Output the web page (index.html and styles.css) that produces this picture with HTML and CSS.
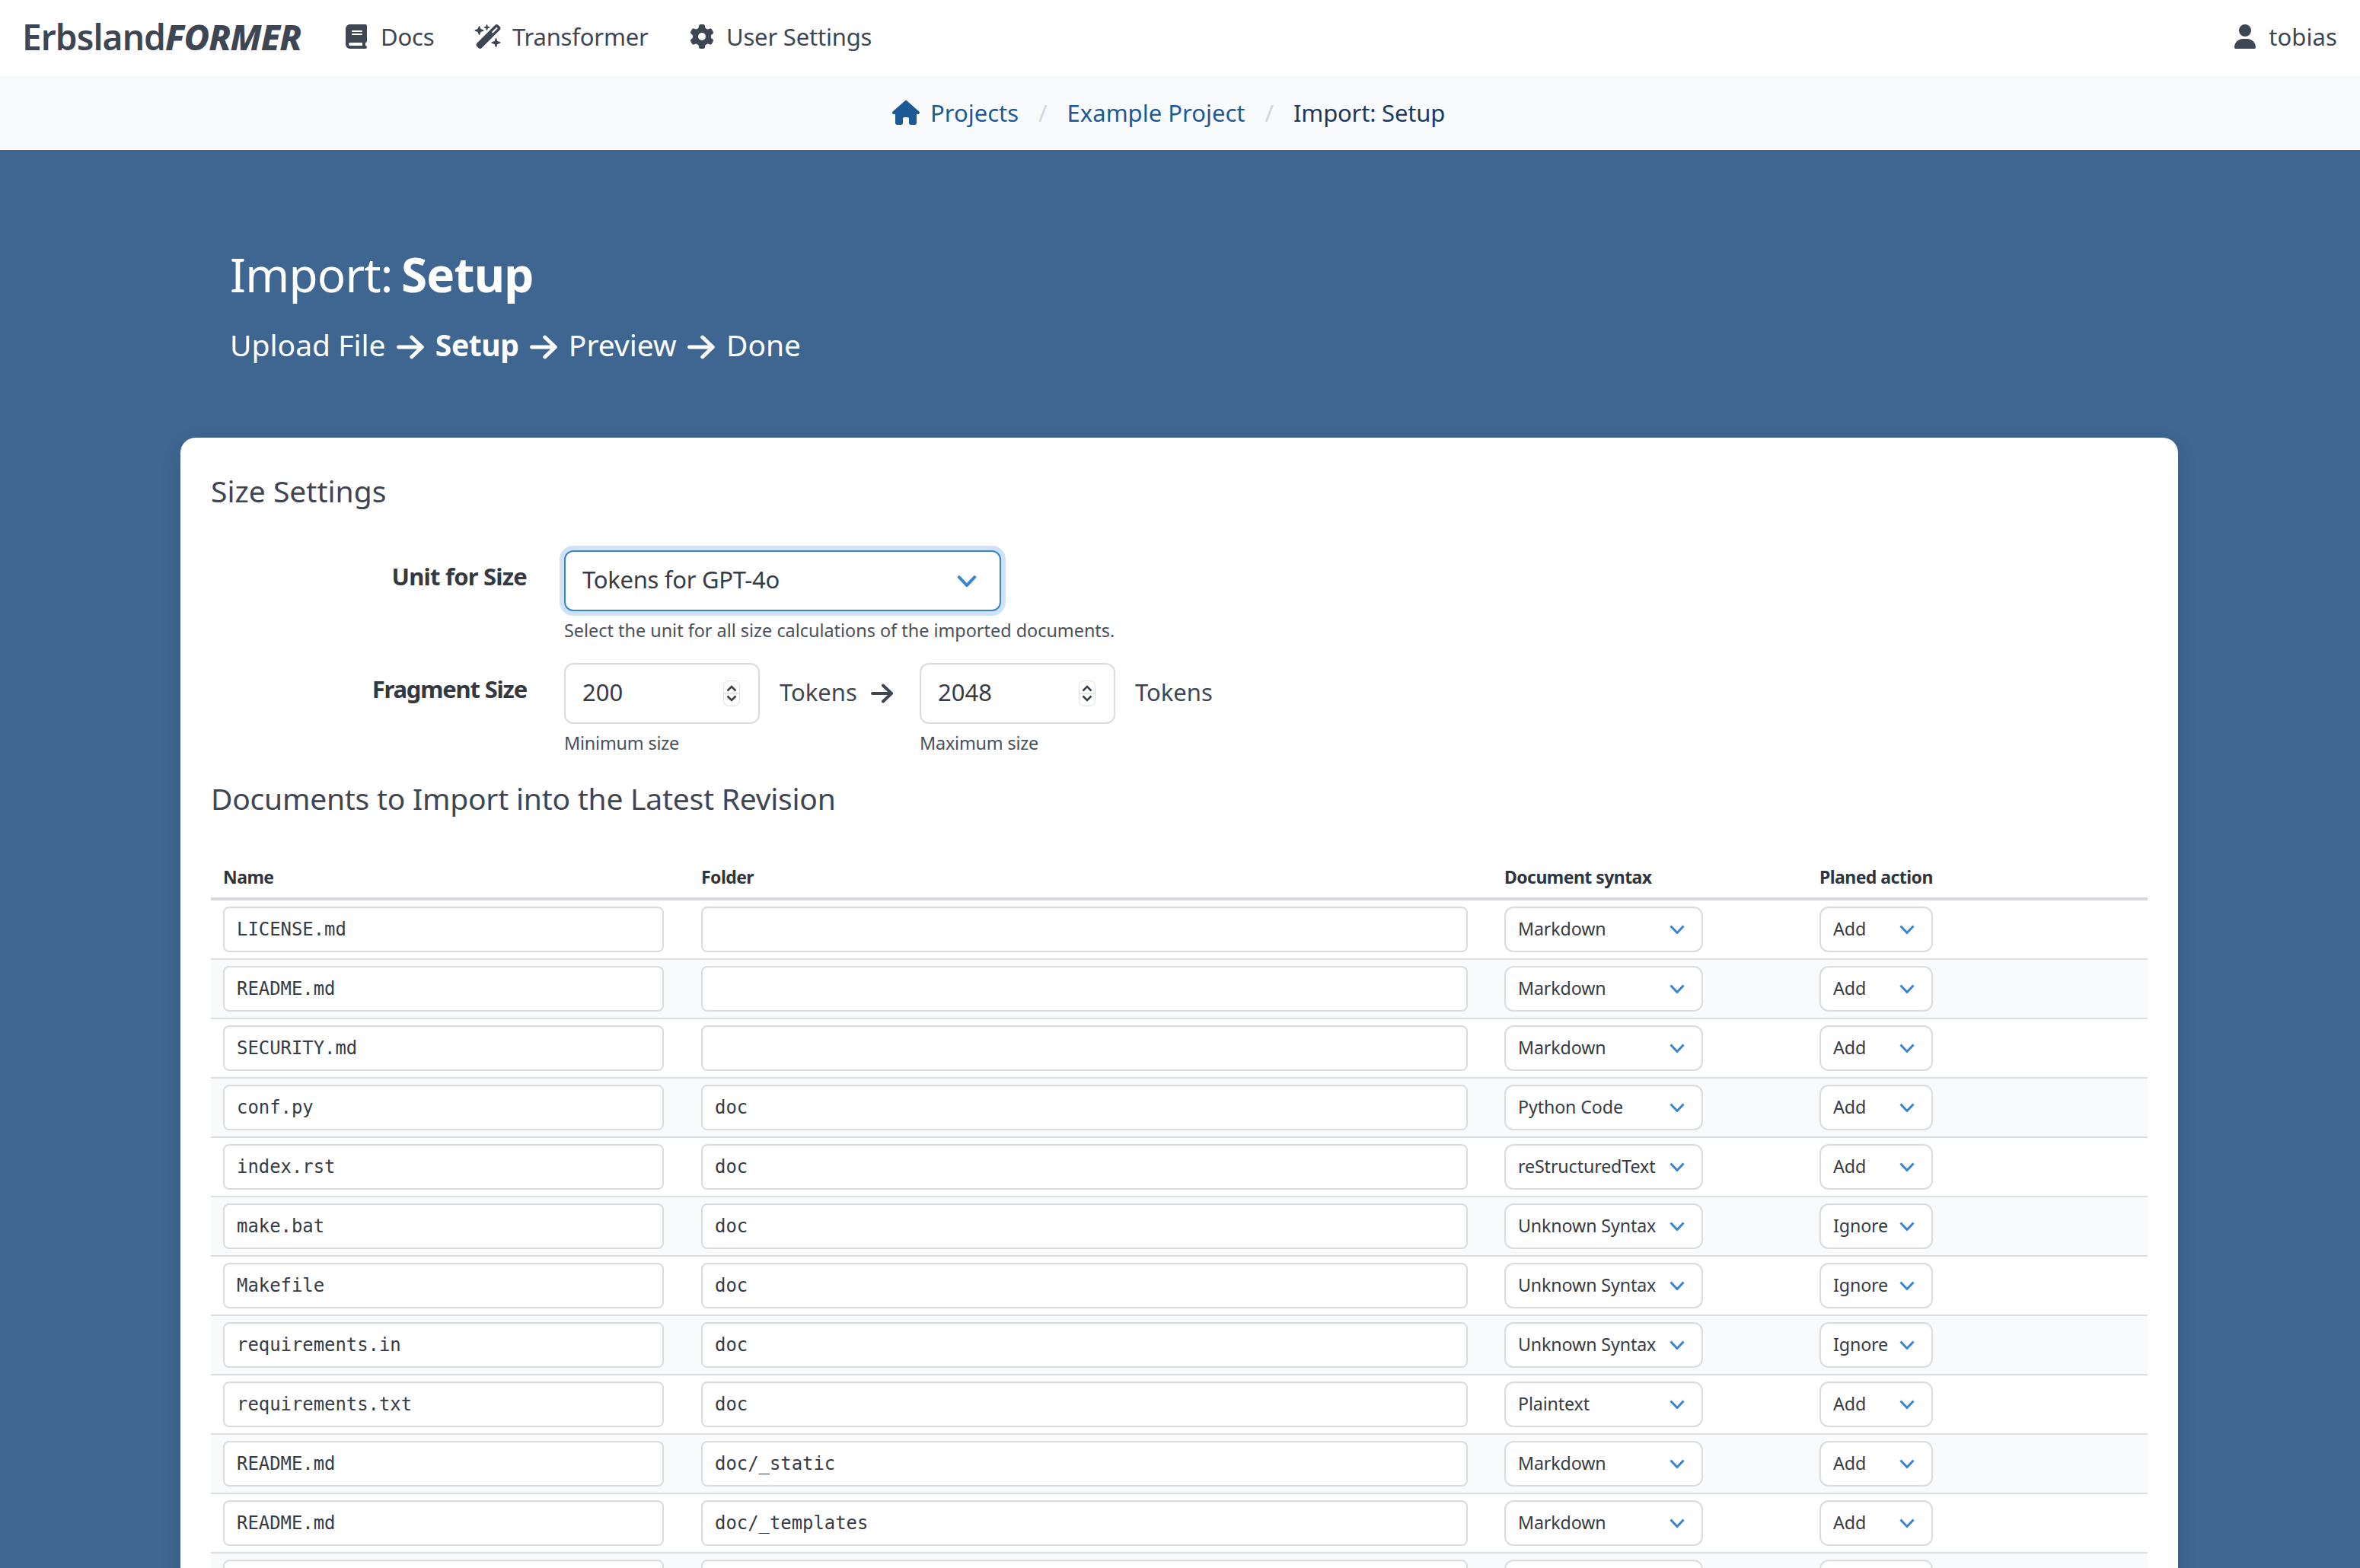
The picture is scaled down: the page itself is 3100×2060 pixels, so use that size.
FILE: index.html
```html
<!DOCTYPE html>
<html lang="en">
<head>
<meta charset="utf-8">
<title>Import: Setup</title>
<link rel="stylesheet" href="styles.css">
</head>
<body>
<svg class="defs" width="0" height="0">
  <symbol id="chev" viewBox="0 0 20 12"><path d="M1.5 1.5 10 10.5 18.5 1.5" fill="none" stroke="currentColor" stroke-width="3"/></symbol>
  <symbol id="arrow" viewBox="0 0 30 26"><path d="M2 13H27M16 2.5 27 13 16 23.5" fill="none" stroke="currentColor" stroke-width="4" stroke-linecap="round" stroke-linejoin="round"/></symbol>
  <symbol id="spin" viewBox="0 0 22 34"><rect x="0.5" y="0.5" width="21" height="33" rx="7" fill="#fff" stroke="#dedede"/><path d="M0.5 17H21.5" stroke="#d2d2d2"/><path d="M5.5 13.5 11 8 16.5 13.5M5.5 20.5 11 26 16.5 20.5" fill="none" stroke="#3a3f48" stroke-width="2.6"/></symbol>
</svg>
<header class="topbar">
  <div class="logo">Erbsland<b>FORMER</b></div>
  <nav class="nav">
    <a class="nav-item"><svg class="ico ico-book" viewBox="0 0 448 512"><path d="M96 0C43 0 0 43 0 96V416c0 53 43 96 96 96H384h32c17.7 0 32-14.3 32-32s-14.3-32-32-32V384c17.7 0 32-14.3 32-32V32c0-17.7-14.3-32-32-32H384 96zm0 384H352v64H96c-17.7 0-32-14.3-32-32s14.3-32 32-32zm32-240c0-8.8 7.2-16 16-16H336c8.8 0 16 7.2 16 16s-7.2 16-16 16H144c-8.8 0-16-7.2-16-16zm16 48H336c8.8 0 16 7.2 16 16s-7.2 16-16 16H144c-8.8 0-16-7.2-16-16s7.2-16 16-16z"/></svg>Docs</a>
    <a class="nav-item"><svg class="ico ico-wand" viewBox="0 0 576 512"><path d="M234.7 42.7L197 56.8c-3 1.1-5 4-5 7.2s2 6.1 5 7.2l37.7 14.1L248.8 123c1.1 3 4 5 7.2 5s6.1-2 7.2-5l14.1-37.7L315 71.2c3-1.1 5-4 5-7.2s-2-6.1-5-7.2L277.3 42.7 263.2 5c-1.1-3-4-5-7.2-5s-6.1 2-7.2 5L234.7 42.7zM46.1 395.4c-18.7 18.7-18.7 49.1 0 67.9l34.6 34.6c18.7 18.7 49.1 18.7 67.9 0L529.9 116.5c18.7-18.7 18.7-49.1 0-67.9L495.3 14.1c-18.7-18.7-49.1-18.7-67.9 0L46.1 395.4zM484.6 82.6l-105 105-23.3-23.3 105-105 23.3 23.3zM7.5 117.2C3 118.9 0 123.2 0 128s3 9.1 7.5 10.8L64 160l21.2 56.5c1.7 4.5 6 7.5 10.8 7.5s9.1-3 10.8-7.5L128 160l56.5-21.2c4.5-1.7 7.5-6 7.5-10.8s-3-9.1-7.5-10.8L128 96 106.8 39.5C105.1 35 100.8 32 96 32s-9.1 3-10.8 7.5L64 96 7.5 117.2zm352 256c-4.5 1.7-7.5 6-7.5 10.8s3 9.1 7.5 10.8L416 416l21.2 56.5c1.7 4.5 6 7.5 10.8 7.5s9.1-3 10.8-7.5L480 416l56.5-21.2c4.5-1.7 7.5-6 7.5-10.8s-3-9.1-7.5-10.8L480 352l-21.2-56.5c-1.7-4.5-6-7.5-10.8-7.5s-9.1 3-10.8 7.5L416 352l-56.5 21.2z"/></svg>Transformer</a>
    <a class="nav-item"><svg class="ico ico-cog" viewBox="0 0 512 512"><path d="M495.9 166.6c3.2 8.7 .5 18.4-6.4 24.6l-43.3 39.4c1.1 8.3 1.7 16.8 1.7 25.4s-.6 17.1-1.7 25.4l43.3 39.4c6.9 6.2 9.6 15.9 6.4 24.6c-4.4 11.9-9.7 23.3-15.8 34.3l-4.7 8.1c-6.6 11-14 21.4-22.1 31.2c-5.9 7.2-15.7 9.6-24.5 6.8l-55.7-17.7c-13.4 10.3-28.2 18.9-44 25.4l-12.5 57.1c-2 9.1-9 16.3-18.2 17.8c-13.8 2.3-28 3.5-42.5 3.5s-28.7-1.2-42.5-3.5c-9.2-1.5-16.2-8.7-18.2-17.8l-12.5-57.1c-15.8-6.5-30.6-15.1-44-25.4L83.1 425.9c-8.8 2.8-18.6 .3-24.5-6.8c-8.1-9.8-15.5-20.2-22.1-31.2l-4.7-8.1c-6.1-11-11.4-22.4-15.8-34.3c-3.2-8.7-.5-18.4 6.4-24.6l43.3-39.4C64.6 273.1 64 264.6 64 256s.6-17.1 1.7-25.4L22.4 191.2c-6.9-6.2-9.6-15.9-6.4-24.6c4.4-11.9 9.7-23.3 15.8-34.3l4.7-8.1c6.6-11 14-21.4 22.1-31.2c5.9-7.2 15.7-9.6 24.5-6.8l55.7 17.7c13.4-10.3 28.2-18.9 44-25.4l12.5-57.1c2-9.1 9-16.3 18.2-17.8C227.3 1.2 241.5 0 256 0s28.7 1.2 42.5 3.5c9.2 1.5 16.2 8.7 18.2 17.8l12.5 57.1c15.8 6.5 30.6 15.1 44 25.4l55.7-17.7c8.8-2.8 18.6-.3 24.5 6.8c8.1 9.8 15.5 20.2 22.1 31.2l4.7 8.1c6.1 11 11.4 22.4 15.8 34.3zM256 336a80 80 0 1 0 0-160 80 80 0 1 0 0 160z"/></svg>User Settings</a>
  </nav>
  <a class="nav-item user"><svg class="ico ico-user" viewBox="0 0 448 512"><path d="M224 256A128 128 0 1 0 224 0a128 128 0 1 0 0 256zm-45.7 48C79.8 304 0 383.8 0 482.3C0 498.7 13.3 512 29.7 512H418.3c16.4 0 29.7-13.3 29.7-29.7C448 383.8 368.2 304 269.7 304H178.3z"/></svg>tobias</a>
</header>
<nav class="crumbs">
  <a class="crumb"><svg class="ico-home" viewBox="0 0 576 512"><path d="M575.8 255.5c0 18-15 32.1-32 32.1h-32l.7 160.2c0 2.7-.2 5.4-.5 8.1V472c0 22.1-17.9 40-40 40H456c-1.1 0-2.2 0-3.3-.1c-1.4 .1-2.8 .1-4.2 .1H416 392c-22.1 0-40-17.9-40-40V448 384c0-17.7-14.3-32-32-32H256c-17.7 0-32 14.3-32 32v64 24c0 22.1-17.9 40-40 40H160 128.1c-1.5 0-3-.1-4.5-.2c-1.2 .1-2.4 .2-3.6 .2H104c-22.1 0-40-17.9-40-40V360c0-.9 0-1.9 .1-2.8V287.6H32c-18 0-32-14-32-32.1c0-9 3-17 10-24L266.4 8c7-7 15-8 22-8s15 2 21 7L564.8 231.5c8 7 12 15 11 24z"/></svg>Projects</a>
  <span class="sep">/</span>
  <a class="crumb">Example Project</a>
  <span class="sep">/</span>
  <a class="crumb current">Import: Setup</a>
</nav>
<main class="stage">
  <section class="hero">
    <h1 class="title">Import: <b>Setup</b></h1>
    <p class="steps">Upload File <svg class="step-arrow"><use href="#arrow"/></svg> <b>Setup</b> <svg class="step-arrow"><use href="#arrow"/></svg> Preview <svg class="step-arrow"><use href="#arrow"/></svg> Done</p>
  </section>
  <section class="card">
    <h2 class="heading">Size Settings</h2>
    <div class="field field-unit">
      <div class="label">Unit for Size</div>
      <div class="body">
        <div class="box select-lg focus"><span class="txt">Tokens for GPT-4o</span><svg class="chev-lg"><use href="#chev"/></svg></div>
        <p class="help help-unit">Select the unit for all size calculations of the imported documents.</p>
      </div>
    </div>
    <div class="field field-frag">
      <div class="label">Fragment Size</div>
      <div class="body">
        <div class="inline">
          <div class="group">
            <div class="box num"><span class="txt">200</span><svg class="spin"><use href="#spin"/></svg></div>
            <p class="help help-num">Minimum size</p>
          </div>
          <div class="unit"><span class="txt">Tokens</span><svg class="unit-arrow"><use href="#arrow"/></svg></div>
          <div class="group">
            <div class="box num"><span class="txt">2048</span><svg class="spin"><use href="#spin"/></svg></div>
            <p class="help help-num">Maximum size</p>
          </div>
          <div class="unit"><span class="txt">Tokens</span></div>
        </div>
      </div>
    </div>
    <h2 class="heading heading-docs">Documents to Import into the Latest Revision</h2>
    <div class="table">
      <div class="row head"><div>Name</div><div>Folder</div><div>Document syntax</div><div>Planed action</div></div>
      <div class="row"><div class="box in">LICENSE.md</div><div class="box in"></div><div class="box sel">Markdown<svg class="chev"><use href="#chev"/></svg></div><div class="box sel">Add<svg class="chev"><use href="#chev"/></svg></div></div>
      <div class="row"><div class="box in">README.md</div><div class="box in"></div><div class="box sel">Markdown<svg class="chev"><use href="#chev"/></svg></div><div class="box sel">Add<svg class="chev"><use href="#chev"/></svg></div></div>
      <div class="row"><div class="box in">SECURITY.md</div><div class="box in"></div><div class="box sel">Markdown<svg class="chev"><use href="#chev"/></svg></div><div class="box sel">Add<svg class="chev"><use href="#chev"/></svg></div></div>
      <div class="row"><div class="box in">conf.py</div><div class="box in">doc</div><div class="box sel">Python Code<svg class="chev"><use href="#chev"/></svg></div><div class="box sel">Add<svg class="chev"><use href="#chev"/></svg></div></div>
      <div class="row"><div class="box in">index.rst</div><div class="box in">doc</div><div class="box sel">reStructuredText<svg class="chev"><use href="#chev"/></svg></div><div class="box sel">Add<svg class="chev"><use href="#chev"/></svg></div></div>
      <div class="row"><div class="box in">make.bat</div><div class="box in">doc</div><div class="box sel">Unknown Syntax<svg class="chev"><use href="#chev"/></svg></div><div class="box sel">Ignore<svg class="chev"><use href="#chev"/></svg></div></div>
      <div class="row"><div class="box in">Makefile</div><div class="box in">doc</div><div class="box sel">Unknown Syntax<svg class="chev"><use href="#chev"/></svg></div><div class="box sel">Ignore<svg class="chev"><use href="#chev"/></svg></div></div>
      <div class="row"><div class="box in">requirements.in</div><div class="box in">doc</div><div class="box sel">Unknown Syntax<svg class="chev"><use href="#chev"/></svg></div><div class="box sel">Ignore<svg class="chev"><use href="#chev"/></svg></div></div>
      <div class="row"><div class="box in">requirements.txt</div><div class="box in">doc</div><div class="box sel">Plaintext<svg class="chev"><use href="#chev"/></svg></div><div class="box sel">Add<svg class="chev"><use href="#chev"/></svg></div></div>
      <div class="row"><div class="box in">README.md</div><div class="box in">doc/_static</div><div class="box sel">Markdown<svg class="chev"><use href="#chev"/></svg></div><div class="box sel">Add<svg class="chev"><use href="#chev"/></svg></div></div>
      <div class="row"><div class="box in">README.md</div><div class="box in">doc/_templates</div><div class="box sel">Markdown<svg class="chev"><use href="#chev"/></svg></div><div class="box sel">Add<svg class="chev"><use href="#chev"/></svg></div></div>
      <div class="row"><div class="box in"></div><div class="box in"></div><div class="box sel"></div><div class="box sel"></div></div>
    </div>
  </section>
</main>
</body>
</html>
```
FILE: styles.css
```css
* { box-sizing: border-box; }
html, body { margin: 0; padding: 0; height: 2060px; overflow: hidden; }
body { font-family: "Noto Sans", sans-serif; font-size: 31px; color: #3a404b; background: #3f6591; display: flex; flex-direction: column; }
.defs { position: absolute; }
h1, h2, p { margin: 0; font-weight: 400; }

.topbar { height: 100px; flex: none; background: #fff; display: flex; align-items: center; padding: 0 30px 4px 29px; color: #3f4653; }
.logo { font-size: 46px; font-weight: 600; letter-spacing: -0.9px; line-height: 56px; width: 425px; }
.logo b { font-weight: 800; font-style: italic; }
.nav { display: flex; align-items: center; flex: 1; }
.nav-item { display: flex; align-items: center; font-size: 31px; line-height: 48px; letter-spacing: -0.2px; }
.nav-item:nth-child(1) { width: 170px; }
.nav-item:nth-child(2) { width: 282px; }
.user { letter-spacing: 0.1px; }
.ico { height: 32px; fill: currentColor; flex: none; }
.ico-book { width: 28px; margin-right: 18px; }
.ico-wand { width: 37px; margin-right: 13px; margin-left: -1px; }
.ico-cog { width: 32px; margin-right: 16px; }
.ico-user { width: 28px; margin-right: 17px; margin-left: -2px; }

.crumbs { height: 97px; flex: none; background: #f9fafc; display: flex; align-items: center; justify-content: center; padding: 0 30px 2px 0; font-size: 31px; color: #1c5a96; }
.crumb { display: flex; align-items: center; }
.current { color: #1b3a5e; letter-spacing: -0.2px; }
.ico-home { width: 36px; height: 32px; fill: currentColor; margin-right: 14px; }
.sep { color: #d4d7db; margin: 0 26px; }

.stage { flex: 1; padding: 0 239px 0 237px; min-height: 0; }
.hero { padding: 123px 0 94px 65px; color: #fff; }
.title { font-size: 62px; line-height: 80px; letter-spacing: -0.8px; word-spacing: -4px; }
.title b { font-weight: 700; }
.steps { font-size: 39px; line-height: 56px; margin-top: 25px; }
.steps b { font-weight: 700; letter-spacing: -0.4px; }
.step-arrow { width: 37px; height: 32px; color: #fff; vertical-align: -4px; margin: 0 4px; }

.card { background: #fff; border-radius: 20px 20px 0 0; padding: 42px 40px 0; box-shadow: 0 8px 30px rgba(0,0,0,0.08); }
.heading { font-size: 39px; line-height: 56px; color: #3f4653; }
.heading-docs { margin-top: 29px; margin-bottom: -1px; letter-spacing: -0.24px; }

.field { display: flex; align-items: flex-start; column-gap: 49px; }
.field-unit { margin-top: 50px; }
.field-frag { margin-top: 27px; }
.label { width: 415px; flex: none; text-align: right; font-weight: 700; line-height: 48px; padding-top: 10px; color: #333841; letter-spacing: -1.1px; }
.field-unit .label { letter-spacing: -0.8px; }
.field-frag .label { letter-spacing: -1.2px; }
.txt { position: relative; top: -2px; }

.box { background: #fff; border: 2px solid #dcdcdc; border-radius: 8px; display: flex; align-items: center; box-shadow: inset 0 1px 2px rgba(10,10,10,0.04); color: #363b44; white-space: nowrap; }
.select-lg { width: 574px; height: 80px; padding-left: 22px; justify-content: space-between; padding-right: 29px; border-radius: 12px; letter-spacing: -0.3px; }
.focus { border-color: #3d85c6; box-shadow: 0 0 0 6px #cfe2f8; }
.chev-lg { width: 28px; height: 16px; color: #3a84d0; }
.help { font-size: 23.4px; line-height: 32px; color: #4a505a; }
.help-unit { margin-top: 9px; }
.help-num { margin-top: 9px; letter-spacing: -0.2px; }

.inline { display: flex; align-items: flex-start; }
.num { width: 257px; height: 80px; padding: 0 24px 0 22px; justify-content: space-between; border-radius: 12px; }
.spin { width: 22px; height: 34px; flex: none; }
.unit { display: flex; align-items: center; height: 80px; color: #3f4653; padding-left: 26px; }
.unit:nth-child(2) { width: 210px; }
.unit-arrow { width: 30px; height: 26px; margin-left: 18px; }

.table { margin-top: 60px; }
.row { display: grid; grid-template-columns: 628px 1055px 414px 149px; padding: 8px 16px; border-bottom: 2px solid #dcdee1; height: 78px; justify-content: start; }
.row:nth-child(odd) { background: #f9fafc; }
.row > :nth-child(1) { width: 579px; }
.row > :nth-child(2) { width: 1007px; }
.row > :nth-child(3) { width: 261px; }
.row.head > div { width: auto; white-space: nowrap; }
.row.head { height: 47px; padding: 0 16px 11px; border-bottom: 4px solid #d6d8db; font-size: 23px; line-height: 32px; font-weight: 700; letter-spacing: -0.55px; color: #30353d; align-items: end; background: #fff; }
.in { height: 60px; font-family: "DejaVu Sans Mono", monospace; font-size: 23.9px; padding: 0 16px; }
.sel { height: 60px; font-size: 23.2px; padding: 0 22px 2px 16px; justify-content: space-between; border-radius: 12px; letter-spacing: -0.1px; }
.chev { width: 20px; height: 12px; color: #3a84d0; flex: none; position: relative; top: 1px; }
```
